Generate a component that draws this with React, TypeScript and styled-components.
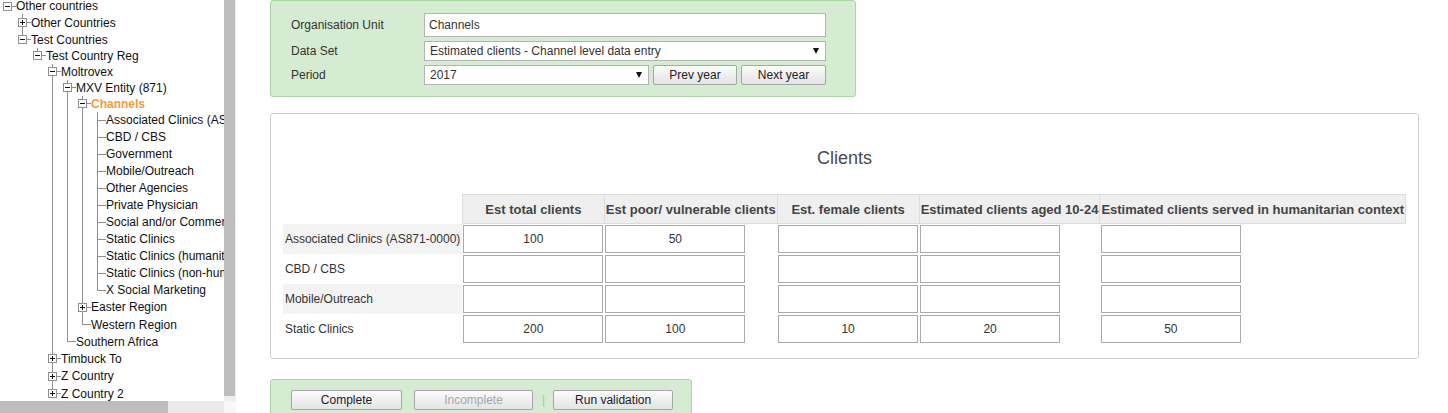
import React from 'react'
import styled, { createGlobalStyle } from 'styled-components'

const GlobalStyle = createGlobalStyle`
  html, body {
    margin: 0;
    padding: 0;
    background: #fff;
    overflow: hidden;
  }
  body {
    font-family: 'Liberation Sans', Arial, sans-serif;
    font-size: 12px;
    color: #333;
  }
`

type TreeNode = {
  label: string
  children?: TreeNode[]
  open?: boolean
  selected?: boolean
}

const leaves = [
  'Associated Clinics (AS871-0000)',
  'CBD / CBS',
  'Government',
  'Mobile/Outreach',
  'Other Agencies',
  'Private Physician',
  'Social and/or Commercial',
  'Static Clinics',
  'Static Clinics (humanitarian)',
  'Static Clinics (non-humanitarian)',
  'X Social Marketing',
].map((label) => ({ label }))

const tree: TreeNode = {
  label: 'Other countries',
  open: true,
  children: [
    { label: 'Other Countries', children: [] },
    {
      label: 'Test Countries',
      open: true,
      children: [
        {
          label: 'Test Country Reg',
          open: true,
          children: [
            {
              label: 'Moltrovex',
              open: true,
              children: [
                {
                  label: 'MXV Entity (871)',
                  open: true,
                  children: [
                    { label: 'Channels', open: true, selected: true, children: leaves },
                    { label: 'Easter Region', children: [] },
                    { label: 'Western Region' },
                  ],
                },
                { label: 'Southern Africa' },
              ],
            },
            { label: 'Timbuck To', children: [] },
            { label: 'Z Country', children: [] },
            { label: 'Z Country 2', children: [] },
          ],
        },
      ],
    },
  ],
}

const columns = [
  'Est total clients',
  'Est poor/ vulnerable clients',
  'Est. female clients',
  'Estimated clients aged 10-24',
  'Estimated clients served in humanitarian context',
]

const rows = [
  { label: 'Associated Clinics (AS871-0000)', values: ['100', '50', '', '', ''] },
  { label: 'CBD / CBS', values: ['', '', '', '', ''] },
  { label: 'Mobile/Outreach', values: ['', '', '', '', ''] },
  { label: 'Static Clinics', values: ['200', '100', '10', '20', '50'] },
]

const LINE = '#8f8f8f'

const Page = styled.div`
  display: flex;
  height: 413px;
  overflow: hidden;
`

/* left tree pane with its scrollbars */

const TreePane = styled.aside`
  flex: 0 0 236px;
  display: grid;
  grid-template-columns: 224px 12px;
  grid-template-rows: 401px 12px;
`

const TreeViewport = styled.div`
  overflow: hidden;
  padding-left: 3px;
`

const VTrack = styled.div`
  background: #eeeeee;
  display: flex;
  flex-direction: column;
`

const VThumb = styled.div`
  width: 11px;
  height: 396px;
  background: #bdbdbd;
`

const HTrack = styled.div`
  background: #e9e9e9;
  display: flex;
`

const HThumb = styled.div`
  width: 168px;
  height: 12px;
  background: #bdbdbd;
`

const Corner = styled.div`
  background: #f7f7f7;
`

const TreeList = styled.ul<{ $nested?: boolean }>`
  list-style: none;
  margin: ${(p) => (p.$nested ? '0' : '-2px 0 0')};
  padding: 0 0 0 ${(p) => (p.$nested ? 15 : 0)}px;
`

const TreeItem = styled.li<{ $last: boolean; $rowH: number; $root?: boolean }>`
  background: ${(p) =>
    p.$root
      ? 'none'
      : `linear-gradient(${LINE}, ${LINE}) no-repeat 4px 0 / 1px ${p.$last ? `${Math.floor(p.$rowH / 2) + 1}px` : '100%'}`};
`

const NodeRow = styled.div<{ $h: number }>`
  display: flex;
  align-items: center;
  height: ${(p) => p.$h}px;
  white-space: nowrap;
`

const Stub = styled.span<{ $w: number; $offset?: number }>`
  flex: 0 0 auto;
  width: ${(p) => p.$w}px;
  height: 1px;
  margin-left: ${(p) => p.$offset ?? 0}px;
  background: ${LINE};
`

const NodeLabel = styled.span<{ $selected?: boolean }>`
  font-size: 12px;
  color: ${(p) => (p.$selected ? '#f39c3c' : '#111')};
  font-weight: ${(p) => (p.$selected ? 'bold' : 'normal')};
`

const Toggle = ({ open }: { open: boolean }) => (
  <svg width="9" height="9" viewBox="0 0 9 9" shapeRendering="crispEdges" style={{ flex: '0 0 auto' }}>
    <rect x="0.5" y="0.5" width="8" height="8" fill="#fff" stroke={LINE} />
    <path d="M2 4.5h5" stroke="#111" />
    {!open && <path d="M4.5 2v5" stroke="#111" />}
  </svg>
)

// expanded rows sit a little tighter than leaves and collapsed ones
const rowHeight = (node: TreeNode) => (node.open ? 16 : node.children ? 17.5 : 17)

const Node = ({ node, last, root }: { node: TreeNode; last: boolean; root?: boolean }) => {
  const branch = !!node.children
  const rowH = rowHeight(node)
  return (
    <TreeItem $last={last} $rowH={rowH} $root={root}>
      <NodeRow $h={rowH}>
        {branch ? (
          <>
            <Toggle open={!!node.open} />
            <Stub $w={4} />
          </>
        ) : (
          <Stub $w={9} $offset={4} />
        )}
        <NodeLabel $selected={node.selected}>{node.label}</NodeLabel>
      </NodeRow>
      {node.open && node.children && (
        <TreeList $nested>
          {node.children.map((child, i) => (
            <Node key={child.label} node={child} last={i === node.children!.length - 1} />
          ))}
        </TreeList>
      )}
    </TreeItem>
  )
}

/* right side */

const Main = styled.main`
  flex: 1;
  display: flex;
  flex-direction: column;
  align-items: flex-start;
  padding: 0 29px 0 34px;
  min-width: 0;
`

const GreenPanel = styled.section`
  box-sizing: border-box;
  background: #d5ecd2;
  border: 1px solid #a9d6a3;
  border-radius: 3px;
`

const SelectionPanel = styled(GreenPanel)`
  padding: 12px 29px 11px 20px;
  display: grid;
  grid-template-columns: 133px 402px;
  grid-template-rows: 24px 20px 20px;
  row-gap: 4px;
  align-items: center;
`

const FieldLabel = styled.div`
  color: #333;
  font-size: 12px;
`

const TextInput = styled.div`
  box-sizing: border-box;
  height: 100%;
  display: flex;
  align-items: center;
  padding: 0 4px;
  background: #fff;
  border: 1px solid #b4b4b4;
  color: #333;
`

const SelectBox = styled.div<{ $width?: number }>`
  box-sizing: border-box;
  height: 20px;
  ${(p) => (p.$width ? `width: ${p.$width}px;` : 'flex: 1;')}
  display: flex;
  align-items: center;
  justify-content: space-between;
  padding: 0 6px 0 5px;
  background: #fff;
  border: 1px solid #b4b4b4;
  color: #333;
`

const Caret = styled.span`
  width: 0;
  height: 0;
  border-left: 3px solid transparent;
  border-right: 3px solid transparent;
  border-top: 6px solid #111;
`

const PeriodRow = styled.div`
  display: flex;
  gap: 4px;
  height: 20px;
`

const Button = styled.button<{ $width: number }>`
  box-sizing: border-box;
  width: ${(p) => p.$width}px;
  height: 20px;
  padding: 0;
  font-family: 'Liberation Sans', Arial, sans-serif;
  font-size: 12px;
  color: #222;
  background: linear-gradient(#fbfbfb, #e4e4e4);
  border: 1px solid #a6a6a6;
  border-radius: 2px;

  &:disabled {
    color: #a8a8a8;
  }
`

const FormPanel = styled.section`
  box-sizing: border-box;
  align-self: stretch;
  margin-top: 16px;
  padding: 33px 0 14px;
  background: #fff;
  border: 1px solid #cfcfcf;
  border-radius: 3px;
`

const FormTitle = styled.h2`
  margin: 0 0 25px;
  text-align: center;
  font-size: 18px;
  line-height: 22px;
  font-weight: normal;
  color: #4a4a4a;
`

const Grid = styled.table`
  margin: 0 auto;
  border-collapse: collapse;
`

const HeadCell = styled.th`
  height: 28px;
  padding: 0 1px;
  background: #efefef;
  border: 1px solid #dddddd;
  color: #444;
  font-size: 13px;
  font-weight: bold;
  white-space: nowrap;
  text-align: center;
`

const CornerCell = styled.th`
  padding: 0;
`

const RowLabel = styled.td<{ $shade: boolean }>`
  height: 30px;
  padding: 0 2px;
  background: ${(p) => (p.$shade ? '#f3f3f3' : '#fff')};
  color: #333;
  white-space: nowrap;
`

const ValueCell = styled.td`
  padding: 1px;
  vertical-align: middle;
`

const ValueInput = styled.input`
  display: block;
  box-sizing: border-box;
  width: 140px;
  height: 28px;
  margin: 0;
  padding: 0 2px;
  border: 1px solid #aaaaaa;
  background: #fff;
  text-align: center;
  font-family: 'Liberation Sans', Arial, sans-serif;
  font-size: 12px;
  color: #333;
`

const ActionPanel = styled(GreenPanel)`
  margin-top: 20px;
  display: flex;
  align-items: center;
  padding: 10px 18px 10px 20px;
`

const Divider = styled.span`
  color: #bbb;
  margin: 0 8px 0 9px;
`

export default function App() {
  return (
    <>
      <GlobalStyle />
      <Page>
        <TreePane>
          <TreeViewport>
            <TreeList>
              <Node node={tree} last root />
            </TreeList>
          </TreeViewport>
          <VTrack>
            <VThumb />
          </VTrack>
          <HTrack>
            <HThumb />
          </HTrack>
          <Corner />
        </TreePane>

        <Main>
          <SelectionPanel>
            <FieldLabel>Organisation Unit</FieldLabel>
            <TextInput>Channels</TextInput>
            <FieldLabel>Data Set</FieldLabel>
            <SelectBox>
              <span>Estimated clients - Channel level data entry</span>
              <Caret />
            </SelectBox>
            <FieldLabel>Period</FieldLabel>
            <PeriodRow>
              <SelectBox $width={225}>
                <span>2017</span>
                <Caret />
              </SelectBox>
              <Button $width={84}>Prev year</Button>
              <Button $width={85}>Next year</Button>
            </PeriodRow>
          </SelectionPanel>

          <FormPanel>
            <FormTitle>Clients</FormTitle>
            <Grid>
              <thead>
                <tr>
                  <CornerCell />
                  {columns.map((c) => (
                    <HeadCell key={c}>{c}</HeadCell>
                  ))}
                </tr>
              </thead>
              <tbody>
                {rows.map((r, i) => (
                  <tr key={r.label}>
                    <RowLabel $shade={i % 2 === 0}>{r.label}</RowLabel>
                    {r.values.map((v, j) => (
                      <ValueCell key={columns[j]}>
                        <ValueInput defaultValue={v} />
                      </ValueCell>
                    ))}
                  </tr>
                ))}
              </tbody>
            </Grid>
          </FormPanel>

          <ActionPanel>
            <Button $width={111}>Complete</Button>
            <Button $width={119} disabled style={{ marginLeft: 12 }}>
              Incomplete
            </Button>
            <Divider>|</Divider>
            <Button $width={120}>Run validation</Button>
          </ActionPanel>
        </Main>
      </Page>
    </>
  )
}
